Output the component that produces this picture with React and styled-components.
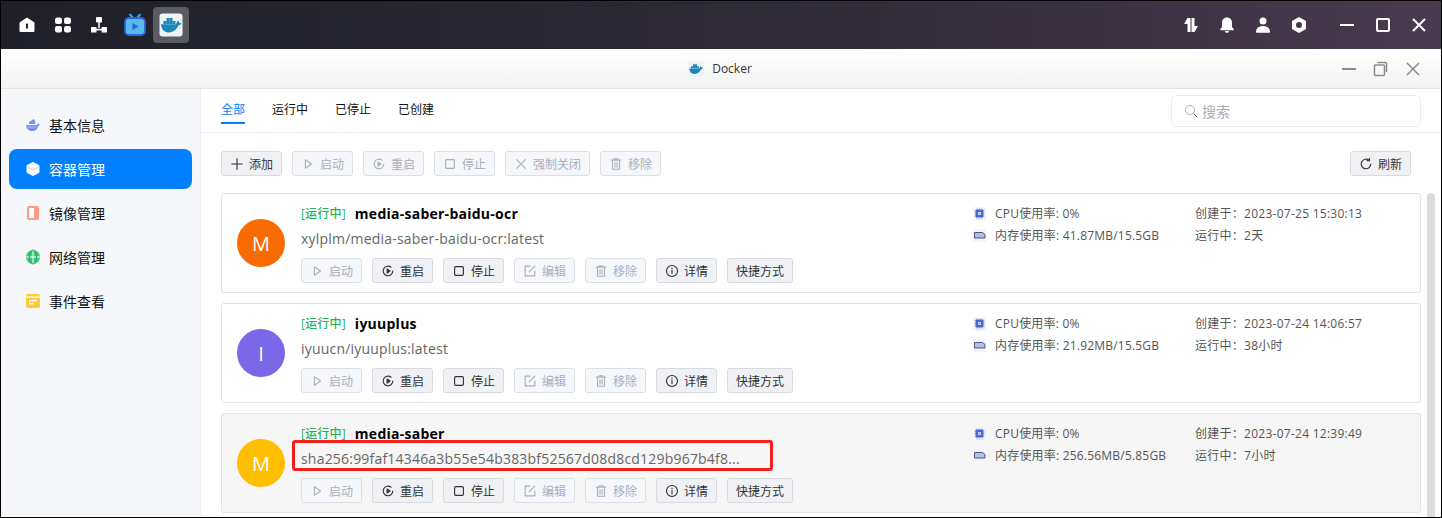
import React from 'react';
import styled, { createGlobalStyle } from 'styled-components';

const Global = createGlobalStyle`
  html, body { margin: 0; padding: 0; background: #000; }
  * { box-sizing: border-box; }
  body { font-family: "Open Sans", "Noto Sans CJK SC", sans-serif; }
`;

const Desktop = styled.div`
  width: 1442px; height: 518px; border: 1px solid #000; overflow: hidden;
  display: flex; flex-direction: column; background: #fff; position: relative;
`;
const TopBar = styled.header`
  height: 48px; flex: none; display: flex; align-items: center; justify-content: space-between;
  padding: 0 4px 0 8px; background: linear-gradient(90deg, #1f2029 0%, #272631 35%, #3a3140 75%, #4a3a4f 100%);
`;
const TaskGroup = styled.div`display: flex; align-items: center;`;
const TaskIcon = styled.div`
  width: 36px; height: 36px; display: flex; align-items: center; justify-content: center; border-radius: 4px;
  background: ${p => (p.$active ? '#5b5c62' : 'transparent')};
`;
const TrayGap = styled.div`width: 12px;`;
const TitleBar = styled.div`
  height: 40px; flex: none; position: relative; display: flex; align-items: center; justify-content: center;
  background: linear-gradient(180deg, #ffffff 0%, #f3f3f3 100%); border-bottom: 1px solid #e5e5e5;
`;
const TitleLabel = styled.div`display: flex; align-items: center; gap: 8px; font-size: 12px; color: #333; margin-right: 2px;`;
const WinControls = styled.div`position: absolute; right: 19px; top: 0; height: 100%; display: flex; align-items: center; gap: 14px;`;
const Body = styled.div`flex: 1; min-height: 0; display: flex;`;
const Sidebar = styled.nav`
  width: 200px; flex: none; background: #f5f7fb; border-right: 1px solid #eee; padding: 16px 8px 0; display: flex; flex-direction: column; gap: 4px;
`;
const NavItem = styled.div`
  height: 40px; border-radius: 8px; display: flex; align-items: center; gap: 9px; padding-left: 17px; font-size: 14px;
  background: ${p => (p.$active ? '#007fff' : 'transparent')}; color: ${p => (p.$active ? '#fff' : '#111')};
`;
const Main = styled.main`flex: 1; min-width: 0; display: flex; flex-direction: column; background: #fff;`;
const TabBar = styled.div`
  height: 44px; flex: none; display: flex; align-items: flex-start; justify-content: space-between; border-bottom: 1px solid #eee; padding: 0 20px;
`;
const Tabs = styled.div`display: flex; gap: 27px;`;
const Tab = styled.div`
  height: 35px; padding-top: 12px; font-size: 12px; line-height: 18px; white-space: nowrap; border-bottom: 2px solid ${p => (p.$active ? '#007fff' : 'transparent')};
  color: ${p => (p.$active ? '#007fff' : '#111')};
`;
const Search = styled.div`
  width: 250px; height: 32px; margin-top: 6px; border: 1px solid #ececec; border-radius: 6px; display: flex; align-items: center; gap: 4px; padding-left: 12px;
  color: #a8adb8; font-size: 14px;
`;
const Toolbar = styled.div`display: flex; justify-content: space-between; padding: 18px 30px 0 20px; flex: none; height: 60px;`;
const BtnRow = styled.div`display: flex; gap: 10px;`;
const Btn = styled.div`
  height: 25px; border-radius: 3px; border: 1px solid ${p => (p.$off ? '#dcdfe4' : '#d9dbe0')};
  background: ${p => (p.$off ? '#f5f7fb' : '#f0f1f5')}; color: ${p => (p.$off ? '#a9b0bc' : '#333')};
  display: flex; align-items: center; justify-content: center; gap: 5px; padding: 0 8px; font-size: 12px; white-space: nowrap; flex: none;
`;
const ListArea = styled.div`flex: 1; min-height: 0; display: flex; gap: 6px; padding-left: 20px; overflow: hidden;`;
const List = styled.div`width: 1200px; flex: none; display: flex; flex-direction: column; gap: 10px;`;
const Scroll = styled.div`width: 8px; height: 400px; border-radius: 4px; background: #dcdcdc; flex: none;`;
const Card = styled.article`
  height: 100px; flex: none; border: 1px solid #e3e3e3; border-radius: 3px; display: flex; padding-left: 15px;
  background: ${p => (p.$hover ? '#f6f6f6' : '#fff')};
`;
const Avatar = styled.div`
  width: 48px; height: 48px; margin-top: 25px; border-radius: 50%; flex: none; background: ${p => p.$c}; color: #fff; font-size: 20px;
  display: flex; align-items: center; justify-content: center;
`;
const Info = styled.div`width: 672px; flex: none; margin-left: 16px; padding-top: 9px;`;
const NameRow = styled.div`display: flex; align-items: center; height: 20px; gap: 9px;`;
const Status = styled.span`color: #1fb35b; font-size: 12px; font-weight: 500; letter-spacing: .2px;`;
const Name = styled.span`color: #000; font-size: 14px; font-weight: 700; letter-spacing: .25px;`;
const Image = styled.div`font-size: 14px; line-height: 20px; letter-spacing: .2px; color: #666; margin-top: 6px; white-space: nowrap;`;
const Actions = styled(BtnRow)`margin-top: 9px;`;
const Stats = styled.div`width: 222px; flex: none; padding-top: 9px; display: flex; flex-direction: column; gap: 2px;`;
const Stat = styled.div`height: 20px; display: flex; align-items: center; gap: 9px; font-size: 12px; letter-spacing: .2px; color: #555; white-space: nowrap;`;
const Meta = styled.div`padding-top: 10px; display: flex; flex-direction: column; gap: 2px;`;
const MetaLine = styled.div`height: 20px; line-height: 20px; font-size: 12px; letter-spacing: .26px; color: #555; white-space: nowrap;`;
const Highlight = styled.div`
  position: absolute; left: 291px; top: 439px; width: 481px; height: 31px; border: 3px solid #f5201c; border-radius: 3px;
`;

const Ico = ({ s = 14, c = 'currentColor', w = 1.3, children }) => (
  <svg width={s} height={s} viewBox="0 0 16 16" fill="none" stroke={c} strokeWidth={w} strokeLinecap="round" strokeLinejoin="round">{children}</svg>
);
const Play = () => <Ico><path d="M5 3.200v9.600L12 8z" /></Ico>;
const Restart = () => <Ico><path d="M13.500 8A5.500 5.500 0 1 1 11.500 3.700" /><path d="M7 5.800v4.400L10.300 8z" fill="currentColor" /></Ico>;
const Stop = () => <Ico><rect x="3" y="3" width="10" height="10" rx="1.200" /></Ico>;
const Cross = () => <Ico><path d="M3 3l10 10M13 3L3 13" /></Ico>;
const Trash = () => <Ico><path d="M2.500 3.500h11M6 3.500V2h4v1.500M4 3.500h8v10.500H4zM6.800 6.500v5M9.200 6.500v5" /></Ico>;
const Edit = () => <Ico><path d="M8 2.500H2.500v11h11V8" /><path d="M7 9l6.500-6.500" /></Ico>;
const Info2 = () => <Ico><circle cx="8" cy="8" r="6.300" /><path d="M8 7v4M8 4.600v.4" /></Ico>;
const Plus = () => <Ico><path d="M8 2v12M2 8h12" /></Ico>;
const Refresh = () => <Ico><path d="M13.500 8A5.500 5.500 0 1 1 11.700 3.900" /><path d="M12 1.500v2.700H9.300" /></Ico>;

const WhaleShape = () => (
  <>
    <path fill="#1e86b8" d="M1.500 11.500h15.800c.5-1.600 1-3 2.200-3.700.9.800 1.200 1.500 1.300 2.300 1-.2 1.700 0 2.200.5-.7 1.300-1.900 1.900-3.200 1.900C18 17.500 14 20 9.500 20 4.500 20 1.800 16.500 1.500 11.500z" />
    <path fill="#1e86b8" d="M4 8h3.100v3.200H4zM7.300 8h3.100v3.200H7.300zM10.600 8h3.100v3.200h-3.100zM13.900 8h2.800v3.200h-2.800zM7.300 4.800h3.100v3.400H7.300zM10.600 4.800h3.100v3.400h-3.100z" />
  </>
);
const DockerApp = ({ s = 24 }) => <svg width={s} height={s} viewBox="0 0 24 24"><rect x="0.500" y="0.500" width="23" height="23" rx="3" fill="#eef3f6" /><g transform="translate(.6 .4) scale(.95)"><WhaleShape /></g></svg>;

const HomeIcon = () => <svg width="18" height="18" viewBox="0 0 18 18"><path fill="#fff" d="M1.500 6.500 9 1.500l7.500 5V15a1 1 0 0 1-1 1h-13a1 1 0 0 1-1-1z" /><rect x="8" y="7.500" width="2" height="5" rx=".6" fill="#23242e" /></svg>;
const GridIcon = () => <svg width="18" height="18" viewBox="0 0 18 18" fill="#fff"><rect x="1" y="1.500" width="7" height="6.500" rx="2.200" /><rect x="10" y="1.500" width="7" height="6.500" rx="2.200" /><rect x="1" y="10" width="7" height="6.500" rx="2.200" /><rect x="10" y="10" width="7" height="6.500" rx="2.200" /></svg>;
const NetIcon = () => <svg width="18" height="18" viewBox="0 0 18 18" fill="#fff"><rect x="6" y="1" width="6" height="5.500" rx=".8" /><rect x="8.300" y="6" width="1.500" height="6" /><rect x="1" y="11" width="5.500" height="5.500" rx=".6" /><rect x="11.500" y="11" width="5.500" height="5.500" rx=".6" /><rect x="5" y="12.800" width="8" height="1.600" /></svg>;
const TvIcon = () => <svg width="24" height="24" viewBox="0 0 24 24"><path d="M7 1.500 10 5M17 1.500 14 5" stroke="#2fa8e8" strokeWidth="2" strokeLinecap="round" /><rect x="2" y="5" width="20" height="17" rx="4" fill="#58b8f2" stroke="#2c63d8" strokeWidth="1.800" /><path d="M9.500 10v7l6-3.500z" fill="#2c63d8" /></svg>;
const Updown = () => <svg width="18" height="18" viewBox="0 0 18 18" fill="#fff"><path d="M5.500 2h3v14h-3V8H2z" /><path d="M9.500 16V2h3v8H16l-3.500 6z" /></svg>;
const Bell = () => <svg width="18" height="18" viewBox="0 0 18 18" fill="#fff"><path d="M9 1.500c-3 0-5 2.200-5 5.500v4L2.300 13v1.200h13.400V13L14 11V7c0-3.300-2-5.500-5-5.500z" /><path d="M7 15h4c0 1.100-.9 1.800-2 1.800S7 16.100 7 15z" /></svg>;
const User = () => <svg width="18" height="18" viewBox="0 0 18 18" fill="#fff"><circle cx="9" cy="5" r="3.500" /><path d="M2 16c0-3.800 2.800-6 7-6s7 2.200 7 6c0 .4-.3.700-.7.700H2.700c-.4 0-.7-.3-.7-.7z" /></svg>;
const Hex = () => <svg width="18" height="18" viewBox="0 0 18 18"><path fillRule="evenodd" fill="#fff" d="M9 1l7 4v8l-7 4-7-4V5zM9 6a3 3 0 1 0 0 6 3 3 0 0 0 0-6z" /></svg>;
const Line = ({ c, s = 18, w = 2, children }) => <svg width={s} height={s} viewBox="0 0 18 18" fill="none" stroke={c} strokeWidth={w}>{children}</svg>;

const Side1 = () => <svg width="14" height="16" viewBox="0 0 14 16"><path fill="#7c8ff5" d="M0 8h10.500l2-1.500L14 8l-1.800 1c-.7 3-2.500 5-5.700 5C3 14 .4 12 0 8z" /><path fill="#7c8ff5" d="M3 5 8 2l.8 1.200.7 3.800H3z" /><path d="M2 10h8" stroke="#b9c4fa" strokeWidth=".8" /></svg>;
const Side2 = () => <svg width="14" height="16" viewBox="0 0 14 16"><path fill="#fff" stroke="#fff" strokeWidth="1" strokeLinejoin="round" d="M7 1.500l6 3v7l-6 3-6-3v-7z" /><path d="M1 5.500 7 9l6-3.500" stroke="#9fcfff" strokeWidth=".9" fill="none" /></svg>;
const Side3 = () => <svg width="14" height="16" viewBox="0 0 14 16"><rect x="1" y="1" width="12" height="14" rx="2" fill="#ff9a86" /><rect x="3" y="3" width="5" height="10" fill="#fff" /></svg>;
const Side4 = () => <svg width="14" height="16" viewBox="0 0 14 16"><circle cx="7" cy="8" r="7" fill="#3ecb6d" /><path d="M7 1v14M0 8h14" stroke="#fff" strokeWidth="1" /><ellipse cx="7" cy="8" rx="3.500" ry="7" fill="none" stroke="#2d9e8f" strokeWidth="1" /></svg>;
const Side5 = () => <svg width="14" height="16" viewBox="0 0 14 16"><rect y="1" width="14" height="14" rx="2" fill="#ffc93c" /><rect y="3.500" width="14" height="1.300" fill="#fff" /><rect x="3" y="7" width="8" height="1.500" fill="#fff" /><rect x="3" y="10" width="4.500" height="1.500" fill="#fff" /></svg>;
const Cpu = () => <svg width="13" height="13" viewBox="0 0 13 13"><rect width="13" height="13" fill="#f3f5fd" /><rect x="2.500" y="2.500" width="8" height="8" rx="1" fill="#4a68d8" /><rect x="5" y="5" width="3" height="3" fill="#dfe5fa" /><path d="M4 1v12M6.500 1v12M9 1v12M1 4h11M1 6.500h11M1 9h11" stroke="#4a68d8" strokeWidth=".5" opacity=".6" /></svg>;
const Mem = () => <svg width="13" height="13" viewBox="0 0 13 13"><rect width="13" height="13" fill="#f3f5fd" /><path d="M1.500 3.500h8l2.500 2v3.500h-10.500z" fill="#b3bfe6" stroke="#3c4a7a" strokeWidth=".9" /></svg>;

const Action = ({ icon, off, children }) => <Btn $off={off}>{icon}{children}</Btn>;

const containers = [
  { l: 'M', c: '#f76b00', n: 'media-saber-baidu-ocr', i: 'xylplm/media-saber-baidu-ocr:latest', m: '41.87MB/15.5GB', d: '2023-07-25 15:30:13', u: '2天' },
  { l: 'I', c: '#7b68e8', n: 'iyuuplus', i: 'iyuucn/iyuuplus:latest', m: '21.92MB/15.5GB', d: '2023-07-24 14:06:57', u: '38小时' },
  { l: 'M', c: '#ffbe00', n: 'media-saber', i: 'sha256:99faf14346a3b55e54b383bf52567d08d8cd129b967b4f8...', m: '256.56MB/5.85GB', d: '2023-07-24 12:39:49', u: '7小时', hover: true },
];

export default function App() {
  return (
    <>
      <Global />
      <Desktop>
        <TopBar>
          <TaskGroup>
            <TaskIcon><HomeIcon /></TaskIcon>
            <TaskIcon><GridIcon /></TaskIcon>
            <TaskIcon><NetIcon /></TaskIcon>
            <TaskIcon><TvIcon /></TaskIcon>
            <TaskIcon $active><DockerApp /></TaskIcon>
          </TaskGroup>
          <TaskGroup>
            <TaskIcon><Updown /></TaskIcon>
            <TaskIcon><Bell /></TaskIcon>
            <TaskIcon><User /></TaskIcon>
            <TaskIcon><Hex /></TaskIcon>
            <TrayGap />
            <TaskIcon><Line c="#fff"><path d="M2 9h14" /></Line></TaskIcon>
            <TaskIcon><Line c="#fff"><rect x="3" y="3" width="12" height="12" rx="1" /></Line></TaskIcon>
            <TaskIcon><Line c="#fff"><path d="M3 3l12 12M15 3 3 15" /></Line></TaskIcon>
          </TaskGroup>
        </TopBar>
        <TitleBar>
          <TitleLabel><DockerApp s={16} />Docker</TitleLabel>
          <WinControls>
            <Line c="#8a8a8a"><path d="M2 9h14" /></Line>
            <Line c="#8a8a8a" w={1.500}><rect x="2.500" y="5" width="10" height="10.500" rx="1" /><path d="M5.500 2.500h8a1 1 0 0 1 1 1V12" /></Line>
            <Line c="#8a8a8a" w={1.500}><path d="M3 3l12 12M15 3 3 15" /></Line>
          </WinControls>
        </TitleBar>
        <Body>
          <Sidebar>
            <NavItem><Side1 />基本信息</NavItem>
            <NavItem $active><Side2 />容器管理</NavItem>
            <NavItem><Side3 />镜像管理</NavItem>
            <NavItem><Side4 />网络管理</NavItem>
            <NavItem><Side5 />事件查看</NavItem>
          </Sidebar>
          <Main>
            <TabBar>
              <Tabs>
                <Tab $active>全部</Tab>
                <Tab>运行中</Tab>
                <Tab>已停止</Tab>
                <Tab>已创建</Tab>
              </Tabs>
              <Search>
                <svg width="14" height="14" viewBox="0 0 14 14" fill="none"><circle cx="6" cy="6" r="4.500" stroke="#a8adb8" /><path d="M9.500 9.500 13 13" stroke="#555" /></svg>
                搜索
              </Search>
            </TabBar>
            <Toolbar>
              <BtnRow>
                <Action icon={<Plus />}>添加</Action>
                <Action off icon={<Play />}>启动</Action>
                <Action off icon={<Restart />}>重启</Action>
                <Action off icon={<Stop />}>停止</Action>
                <Action off icon={<Cross />}>强制关闭</Action>
                <Action off icon={<Trash />}>移除</Action>
              </BtnRow>
              <Action icon={<Refresh />}>刷新</Action>
            </Toolbar>
            <ListArea>
              <List>
                {containers.map(x => (
                  <Card key={x.n} $hover={x.hover}>
                    <Avatar $c={x.c}>{x.l}</Avatar>
                    <Info>
                      <NameRow><Status>[运行中]</Status><Name>{x.n}</Name></NameRow>
                      <Image>{x.i}</Image>
                      <Actions>
                        <Action off icon={<Play />}>启动</Action>
                        <Action icon={<Restart />}>重启</Action>
                        <Action icon={<Stop />}>停止</Action>
                        <Action off icon={<Edit />}>编辑</Action>
                        <Action off icon={<Trash />}>移除</Action>
                        <Action icon={<Info2 />}>详情</Action>
                        <Action>快捷方式</Action>
                      </Actions>
                    </Info>
                    <Stats>
                      <Stat><Cpu />CPU使用率: 0%</Stat>
                      <Stat><Mem />内存使用率: {x.m}</Stat>
                    </Stats>
                    <Meta>
                      <MetaLine>创建于：{x.d}</MetaLine>
                      <MetaLine>运行中：{x.u}</MetaLine>
                    </Meta>
                  </Card>
                ))}
              </List>
              <Scroll />
            </ListArea>
          </Main>
        </Body>
        <Highlight />
      </Desktop>
    </>
  );
}
